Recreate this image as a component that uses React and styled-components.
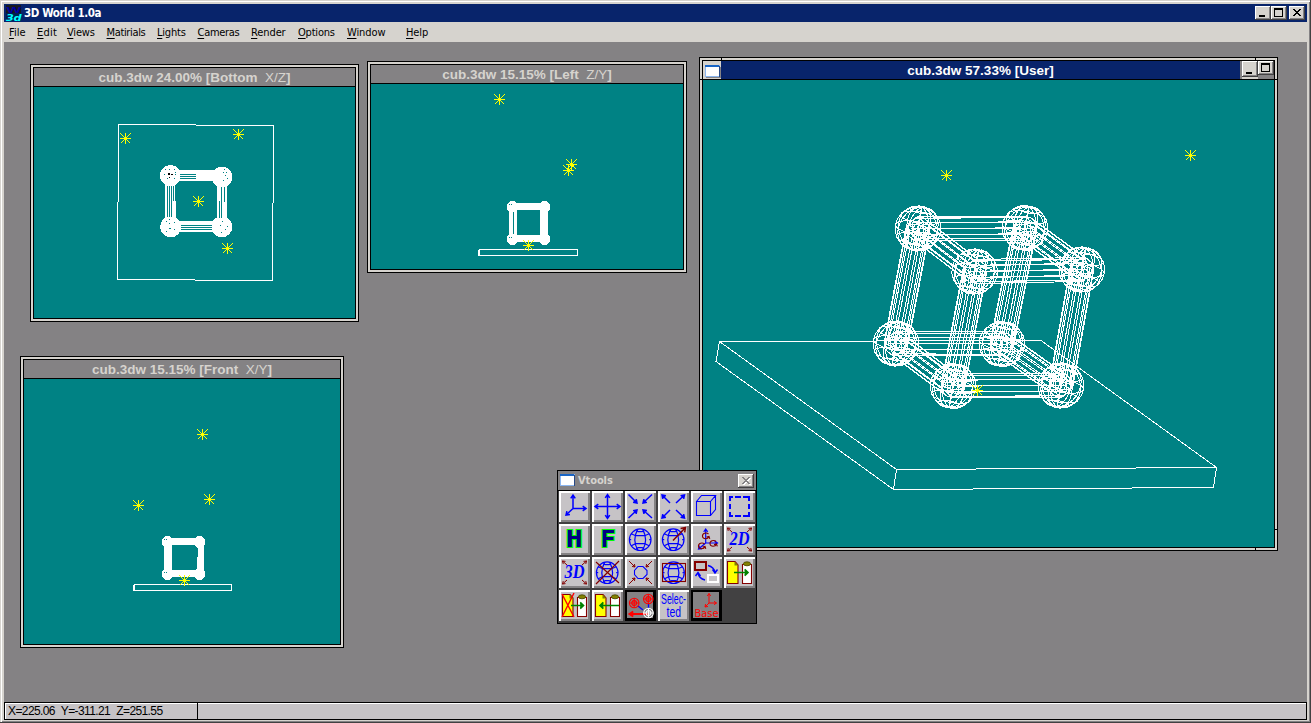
import React from 'react';
import styled, { createGlobalStyle, css } from 'styled-components';

const c = {
  face: '#d6d3ce',
  gray: '#848284',
  silver: '#c6c3c6',
  navy: '#08246b',
  teal: '#008284',
  dark: '#424142',
  blue: '#0000ff',
  maroon: '#840000',
};

const Global = createGlobalStyle`
  * { box-sizing: border-box; }
  html, body { margin: 0; height: 100%; overflow: hidden; background: ${c.face}; }
  body { font-family: "DejaVu Sans Condensed", "DejaVu Sans", sans-serif; font-size: 11px; color: #000; }
  svg { display: block; }
`;

const Frame = styled.div`
  width: 1311px;
  height: 723px;
  display: flex;
  flex-direction: column;
  padding: 4px 3px 2px 4px;
  background: ${c.face};
  border: solid ${c.dark};
  border-width: 0 1px 1px 0;
  box-shadow: inset 1px 1px 0 ${c.face}, inset 2px 2px 0 #fff, inset -1px -1px 0 ${c.gray};
`;

const AppTitle = styled.header`
  height: 18px;
  flex: none;
  display: flex;
  align-items: center;
  gap: 2px;
  padding: 0 2px 0 1px;
  background: ${c.navy};
  color: #fff;
  font-weight: bold;
  font-size: 11.5px;
  letter-spacing: -0.42px;
`;

const TitleText = styled.span`
  flex: 1;
  line-height: 18px;
  white-space: pre;
`;

const Buttons = styled.div`
  display: flex;
`;

const CaptionButton = styled.button`
  width: 16px;
  height: ${(p) => p.$h || 14}px;
  margin: 0 0 0 ${(p) => p.$ml || 0}px;
  padding: 0;
  flex: none;
  border: 0;
  background: ${c.face};
  box-shadow: inset -1px -1px 0 ${c.dark}, inset 1px 1px 0 #fff, inset -2px -2px 0 ${c.gray};
`;

const MenuBar = styled.nav`
  height: 20px;
  flex: none;
  display: flex;
  align-items: center;
  padding: 1px 0 0 5px;
  font-size: 11px;
  line-height: 20px;
`;

const MenuItem = styled.span`
  width: ${(p) => p.$w}px;
  letter-spacing: ${(p) => p.$ls || 0}px;
  white-space: nowrap;
  u { text-underline-offset: 2px; text-decoration-thickness: 1px; }
`;

const Desktop = styled.main`
  flex: 1;
  position: relative;
  background: ${c.gray};
`;

const StatusBar = styled.footer`
  height: 18px;
  flex: none;
  display: flex;
  border: 1px solid #000;
  background: ${c.silver};
  box-shadow: inset 1px 1px 0 #fff;
`;

const StatusCell = styled.div`
  width: 193px;
  padding-left: 3px;
  border-right: 1px solid #000;
  font: 12px/16px "Liberation Sans", sans-serif;
  letter-spacing: -0.6px;
  word-spacing: 0.3px;
  white-space: pre;
`;

const ticks = css`
  background:
    linear-gradient(#000, #000) left 21px top 0 / 1px 100% no-repeat,
    linear-gradient(#000, #000) right 21px top 0 / 1px 100% no-repeat,
    linear-gradient(#000, #000) left 0 top 21px / 100% 1px no-repeat,
    linear-gradient(#000, #000) left 0 bottom 20px / 100% 1px no-repeat,
    ${c.face};
`;

const ChildFrame = styled.section`
  position: absolute;
  left: ${(p) => p.$x}px;
  top: ${(p) => p.$y}px;
  width: ${(p) => p.$w}px;
  height: ${(p) => p.$h}px;
  padding: 2px;
  border: 1px solid #000;
  background: ${c.face};
  ${(p) => p.$active && ticks}
`;

const ChildInner = styled.div`
  height: 100%;
  display: flex;
  flex-direction: column;
  border: 1px solid #000;
`;

const ChildTitle = styled.div`
  height: 19px;
  flex: none;
  display: flex;
  justify-content: space-between;
  border-bottom: 1px solid #000;
  background: ${(p) => (p.$active ? c.navy : c.gray)};
  color: ${(p) => (p.$active ? '#fff' : c.face)};
`;

const ChildLabel = styled.span`
  flex: 1;
  text-align: center;
  font: bold 13.5px/19px "Liberation Sans", sans-serif;
  white-space: pre;
  em { font-style: normal; font-weight: normal; }
`;

const SysMenu = styled.div`
  width: 18px;
  flex: none;
  padding: 4px 0 0 2px;
  background: ${c.face};
`;

const ChildButtons = styled.div`
  width: 34px;
  flex: none;
  display: flex;
  padding-left: 2px;
  background: linear-gradient(90deg, ${c.gray} 2px, ${c.face} 2px 18px, ${c.gray} 18px);
`;

const Viewport = styled.div`
  flex: 1;
  min-height: 0;
  background: ${c.teal};
`;

const Palette = styled.aside`
  position: absolute;
  left: 553px;
  top: 428px;
  width: 200px;
  height: 154px;
  border: 1px solid #000;
  background: ${c.dark};
`;

const PaletteTitle = styled.div`
  height: 20px;
  display: flex;
  align-items: center;
  gap: 2px;
  padding: 0 2px;
  border-bottom: 1px solid #000;
  background: ${c.gray};
  color: ${c.face};
  font: bold 11px/18px "DejaVu Sans Condensed", "DejaVu Sans", sans-serif;
  letter-spacing: -0.1px;
`;

const ToolGrid = styled.div`
  display: grid;
  grid-template-columns: repeat(6, 31px);
  grid-auto-rows: 31px;
  gap: 2px;
  padding: 0 1px;
`;

const ToolButton = styled.button`
  width: 31px;
  height: 31px;
  padding: 0;
  border: 0;
  background: ${(p) => (p.$pressed ? c.gray : c.silver)};
  box-shadow: ${(p) => (p.$pressed
    ? 'inset 0 0 0 2px #000, inset -3px -3px 0 #000'
    : `inset 1px 1px 0 #fff, inset 2px 2px 0 #fff, inset -1px -1px 0 ${c.gray}, inset -2px -2px 0 ${c.gray}`)};
`;

/* ---------- glyphs ---------- */

const MinGlyph = ({ h = 14, y = 9 }) => (
  <svg width="16" height={h}><rect x="4" y={y} width="6" height="2" /></svg>
);
const MaxGlyph = () => (
  <svg width="16" height="14"><path d="M3 2h9v9H3zM4 4v6h7V4z" fillRule="evenodd" /></svg>
);
const CloseGlyph = ({ color = '#000', shadow }) => (
  <svg width="16" height="14" shapeRendering="crispEdges">
    {shadow && <path transform="translate(1 1)" d="M4 3h2v1h1v1h2V4h1V3h2v1h-1v1h-1v1H9v1h1v1h1v1h1v1h-2V9H9V8H7v1H6v1H4V9h1V8h1V7h1V6H6V5H5V4H4z" fill="#fff" />}
    <path d="M4 3h2v1h1v1h2V4h1V3h2v1h-1v1h-1v1H9v1h1v1h1v1h1v1h-2V9H9V8H7v1H6v1H4V9h1V8h1V7h1V6H6V5H5V4H4z" fill={color} />
  </svg>
);
const WindowGlyph = () => (
  <svg width="16" height="14" shapeRendering="crispEdges">
    <rect x="1" y="2" width="15" height="11" fill="#848284" />
    <rect x="0" y="0" width="15" height="12" fill="#8cb6ef" />
    <rect x="1" y="2" width="13" height="9" fill="#fff" />
    <rect x="0" y="0" width="14" height="2" fill="#1865c6" />
    <rect x="14" y="1" width="1" height="11" fill="#294984" />
  </svg>
);
const Logo = () => (
  <svg width="17" height="16" overflow="visible">
    <rect x="1" width="15" height="8" fill="#181820" />
    <rect x="1" y="8" width="15" height="8" fill="#002050" />
    <text x="1.5" y="7.6" textLength="14" lengthAdjust="spacingAndGlyphs" fontFamily="Liberation Sans, sans-serif" fontWeight="bold" fontSize="9" fill="#0000a0">W</text>
    <text x="1" y="15.6" textLength="15" lengthAdjust="spacingAndGlyphs" fontFamily="DejaVu Sans, sans-serif" fontStyle="italic" fontWeight="bold" fontSize="9.5" fill="#00ffff">3d</text>
  </svg>
);

/* ---------- scene ---------- */

const Star = ({ x, y }) => (
  <path
    transform={`translate(${x} ${y})`}
    d="M-5 .5H6M.5 -5V6M-4.5 -4.5l10 10M5.5 -4.5l-10 10M-1 -.5H2M-1 1.5H2"
    stroke="#ffff00"
    fill="none"
    shapeRendering="crispEdges"
  />
);

// screen vectors of the three unit axes in the user camera
const AX = [0.871, 0];
const AY = [0.179, -0.936];
const AZ = [0.464, 0.342];
const mix = (a, b, d) => [
  a * AX[0] + b * AY[0] + d * AZ[0],
  a * AX[1] + b * AY[1] + d * AZ[1],
];
const fmt = (pts) => pts.map((p) => `${p[0].toFixed(1)} ${p[1].toFixed(1)}`).join('L');

function spherePath(cx, cy, r) {
  let d = '';
  const steps = 24;
  for (let m = 0; m < 6; m += 1) {
    const t = (m * Math.PI) / 6;
    const pts = [];
    for (let k = 0; k <= steps; k += 1) {
      const a = (k * 2 * Math.PI) / steps;
      const [x, y] = mix(r * Math.sin(a) * Math.cos(t), r * Math.cos(a), r * Math.sin(a) * Math.sin(t));
      pts.push([cx + x, cy + y]);
    }
    d += `M${fmt(pts)}`;
  }
  for (let l = 1; l < 6; l += 1) {
    const f = (l * Math.PI) / 6;
    const rr = r * Math.sin(f);
    const pts = [];
    for (let k = 0; k <= steps; k += 1) {
      const a = (k * 2 * Math.PI) / steps;
      const [x, y] = mix(rr * Math.cos(a), r * Math.cos(f), rr * Math.sin(a));
      pts.push([cx + x, cy + y]);
    }
    d += `M${fmt(pts)}`;
  }
  return d;
}

function tubePath(a, b, axis, r) {
  const n = 12;
  const ends = [a, b].map((p) => {
    const ring = [];
    for (let k = 0; k <= n; k += 1) {
      const t = ((k + 0.35) * 2 * Math.PI) / n;
      const u = r * Math.cos(t);
      const v = r * Math.sin(t);
      const [x, y] = axis === 0 ? mix(0, u, v) : axis === 1 ? mix(u, 0, v) : mix(u, v, 0);
      ring.push([p[0] + x, p[1] + y]);
    }
    return ring;
  });
  let d = `M${fmt(ends[0])}M${fmt(ends[1])}`;
  for (let k = 0; k < n; k += 1) d += `M${fmt([ends[0][k], ends[1][k]])}`;
  return d;
}

const nodes = [
  [918, 228.5], [1025, 228], [974.7, 271.5], [1081.8, 269.5],
  [896, 343.5], [1002, 344], [953, 386], [1061, 385.5],
];
const edges = [
  [0, 1, 0], [2, 3, 0], [4, 5, 0], [6, 7, 0],
  [0, 4, 1], [1, 5, 1], [2, 6, 1], [3, 7, 1],
  [0, 2, 2], [1, 3, 2], [4, 6, 2], [5, 7, 2],
];

const Scene = ({ x, y, w, h, children }) => (
  <svg width={w} height={h} viewBox={`${x} ${y} ${w} ${h}`} shapeRendering="crispEdges">{children}</svg>
);

const UserScene = () => (
  <Scene x={703} y={80} w={571} h={467}>
    <g fill="none" stroke="#fff" strokeWidth="1">
      <path d="M719.5 341.5L1041 340.5L1216.5 467.5L896.5 469.5ZM719.5 341.5L716 361.5L893.5 489.5L1213.5 487.5L1216.5 467.5M896.5 469.5L893.5 489.5" />
      {edges.map(([a, b, axis]) => <path key={`${a}-${b}`} d={tubePath(nodes[a], nodes[b], axis, 12)} />)}
      {nodes.map((p) => <path key={p.join()} d={spherePath(p[0], p[1], 22.8)} />)}
    </g>
    <Star x={946} y={175} /><Star x={1190} y={155} /><Star x={977} y={390} />
  </Scene>
);

const BottomScene = () => (
  <Scene x={34} y={87} w={321} h={231}>
    <path d="M118 124.5H196M196 125.5H274M273.5 125V203M272.5 203V281M273 280.5H195M195 279.5H117M117.5 280V202M118.5 202V124" stroke="#fff" fill="none" />
    <g fill="#fff">
      <rect x="166" y="170" width="60" height="11" />
      <rect x="166" y="221" width="60" height="11" />
      <rect x="165" y="175" width="10" height="52" />
      <rect x="166" y="201" width="10" height="26" />
      <rect x="217" y="175" width="10" height="52" />
      <circle cx="170.5" cy="175.5" r="10.5" /><circle cx="222" cy="177" r="10.5" />
      <circle cx="170.8" cy="226.8" r="10.5" /><circle cx="221.8" cy="226.8" r="10.5" />
    </g>
    <path d="M180 174.5H196M180 176.5H196M180 178.5H196M181 225.5H212M181 227.5H212M181 229.5H212M167.5 186V217M169.5 186V217M171.5 186V217M173.5 186V201M219.5 201V218M221.5 187V218M224.5 187V202" stroke={c.teal} />
    <path d="M165 169.5h1m3 0h1m4 0h1M164 174.5h1m10 0h1M175 172.5h1M167 178.5h1m6 0h1M224 169.5h1m-2 3h1m2 0h1m-2 3h1m-3 5h1m3-2h1M169 219.5h1m-1 4h1m4 6h1m-9 2h1m2-3h2M166 221.5h1m7 1h1M222 221.5h1m-3 4h1m4 4h1m-5 3h1m5-6h1" stroke={c.teal} />
    <path d="M168 173.5h2M168 174.5h2M171 174.5h2M169 177.5h1" stroke="#000" />
    <Star x={125} y={138} /><Star x={238} y={134} /><Star x={198} y={201} /><Star x={227} y={248} />
  </Scene>
);

const SmallCube = ({ x, y, gap }) => (
  <g transform={`translate(${x} ${y})`}>
    <g fill="#fff">
      <rect x="0" y="-3" width="33" height="7" />
      <rect x="0" y="29" width="33" height="7" />
      <rect x="-3" y="0" width="8" height="32" />
      <rect x={gap ? 28 : 31} y="0" width={gap ? 8 : 6} height="32" />
      <rect x={gap ? 28 : 30} y="16" width="7" height="16" />
      <circle cx="1" cy="1" r="6" /><circle cx="33" cy="1" r="6" />
      <circle cx="1" cy="33" r="6" /><circle cx="33" cy="33" r="6" />
    </g>
    {gap && <path d="M1.5 6V28" stroke={c.teal} />}
    <path d="M-3 -1.5h1m1 0h1M-3 31.5h1m1 0h1" stroke={c.teal} />
  </g>
);

const LeftScene = () => (
  <Scene x={371} y={84} w={312} h={185}>
    <SmallCube x={511.5} y={206} gap />
    <path d="M478.5 250V256M479.5 249.5H577.5V255.5H479.5Z" fill="none" stroke="#fff" />
    <Star x={499} y={99} /><Star x={571} y={164} /><Star x={568} y={170} /><Star x={528} y={245} />
  </Scene>
);

const FrontScene = () => (
  <Scene x={24} y={379} w={316} h={265}>
    <SmallCube x={166.5} y={541} />
    <path d="M133.5 585V591M134.5 584.5H231.5V590.5H134.5Z" fill="none" stroke="#fff" />
    <Star x={202} y={434} /><Star x={209} y={499} /><Star x={138} y={505} /><Star x={184} y={580} />
  </Scene>
);

/* ---------- tool icons ---------- */

function Arrow({ from, to, color = c.blue, w = 1.5, head = 4, spread = 0.6, solid }) {
  const a = Math.atan2(to[1] - from[1], to[0] - from[0]);
  const p1 = [to[0] - head * Math.cos(a - spread), to[1] - head * Math.sin(a - spread)];
  const p2 = [to[0] - head * Math.cos(a + spread), to[1] - head * Math.sin(a + spread)];
  return (
    <path
      d={`M${from.join(' ')}L${to.join(' ')}M${p1.join(' ')}L${to.join(' ')}L${p2.join(' ')}`}
      stroke={color}
      strokeWidth={w}
      fill={solid ? color : 'none'}
    />
  );
}
const Icon = ({ children }) => <svg width="31" height="31" fill="none">{children}</svg>;

const Globe = ({ x = 15.5, y = 15.7 }) => (
  <g transform={`translate(${x} ${y})`} stroke={c.blue} strokeWidth="1.2">
    <circle r="10.8" />
    <path d="M-2.5 -10.3C-6 -4 -6 4 -2.5 10.3M2.5 -10.3C6 -4 6 4 2.5 10.3" />
    <path d="M-9 -6L-4.5 -4H4.5L9 -6M-9 6L-4.5 4H4.5L9 6M-10.8 0H-9M9 0H10.8M-4 -9L-2 -8H2L4 -9M-4 9L-2 8H2L4 9" />
  </g>
);
const Corners = () => (
  <>
    <Arrow from={[8, 8]} to={[3.5, 4]} color={c.maroon} w={1} head={3} />
    <Arrow from={[23, 8]} to={[27.5, 4]} color={c.maroon} w={1} head={3} />
    <Arrow from={[8, 23]} to={[3.5, 27]} color={c.maroon} w={1} head={3} />
    <Arrow from={[23, 23]} to={[27.5, 27]} color={c.maroon} w={1} head={3} />
  </>
);
const Letter = ({ ch, x, len }) => (
  <text x={x} y="23" textLength={len} lengthAdjust="spacingAndGlyphs" fontFamily="DejaVu Sans Mono, monospace" fontWeight="bold" fontSize="22.5" fill="#000084" stroke="#00ff00" strokeWidth="2" paintOrder="stroke">{ch}</text>
);
const Dim = ({ ch }) => (
  <text x="5.5" y="21.3" textLength="20" lengthAdjust="spacingAndGlyphs" fontFamily="Liberation Serif, serif" fontStyle="italic" fontWeight="bold" fontSize="18" fill={c.blue}>{ch}</text>
);
const Doc = () => (
  <g>
    <path d="M3.5 4.5H11L14 8V26.5H3.5Z" fill="#ffff00" stroke={c.maroon} strokeWidth="1.1" />
    <path d="M10.5 4.5V8.5H14.5Z" fill="#848200" />
  </g>
);
const Clipboard = () => (
  <g>
    <path d="M18.5 7.5H27.5V26.5H18.5Z" fill="#fff" stroke={c.maroon} strokeWidth="1.1" />
    <ellipse cx="23" cy="6.8" rx="3.6" ry="2" fill="#848200" stroke="#424100" strokeWidth=".8" />
  </g>
);
const GreenArrow = ({ from, to }) => (
  <Arrow from={[from, 15.5]} to={[to, 15.5]} color="#008200" w={1.6} head={4.5} spread={0.75} solid />
);
const Ball = ({ x, y, color, r = 4.8 }) => (
  <g transform={`translate(${x} ${y})`} stroke={color} strokeWidth="1.1">
    <circle r={r} /><circle r={r / 2} /><path d={`M${-r} 0H${r}M0 ${-r}V${r}`} />
  </g>
);
const Swirl = ({ x, y }) => (
  <path transform={`translate(${x} ${y})`} d="M3 -2C1 -4 -3.5 -3 -3 .5C-2.5 3.5 2.5 3.5 3.5 .5M1 1l2.5 -.5l.8 2.4" stroke={c.maroon} strokeWidth="1.1" />
);

const tools = [
  { n: 'axes', i: <><Arrow from={[14, 17.5]} to={[14, 4]} /><Arrow from={[14, 17.5]} to={[27, 17.5]} /><Arrow from={[14, 17.5]} to={[7, 24]} /></> },
  { n: 'move', i: <><Arrow from={[15.5, 15.5]} to={[15.5, 3.5]} /><Arrow from={[15.5, 15.5]} to={[15.5, 27.5]} /><Arrow from={[15.5, 15.5]} to={[3, 15.5]} /><Arrow from={[15.5, 15.5]} to={[28, 15.5]} /></> },
  { n: 'shrink', i: <><Arrow from={[3.5, 3.5]} to={[12, 12]} solid /><Arrow from={[27, 3.5]} to={[18, 12]} solid /><Arrow from={[3.5, 27]} to={[12, 19]} solid /><Arrow from={[27, 27]} to={[18, 19]} solid /></> },
  { n: 'expand', i: <><Arrow from={[12, 12]} to={[4, 4]} solid /><Arrow from={[18, 12]} to={[26.5, 4]} solid /><Arrow from={[12, 19]} to={[4, 27]} solid /><Arrow from={[18, 19]} to={[26.5, 27]} solid /></> },
  { n: 'box', i: <path d="M5.5 10.5H19.5V24.5H5.5ZM5.5 10.5L10.5 4.5H24.5L19.5 10.5M24.5 4.5V18.5L19.5 24.5" stroke={c.blue} strokeWidth="1.1" /> },
  { n: 'select', i: <path d="M4.5 6H9M11 6H17M19 6H26M4.5 25H9M11 25H17M19 25H26M6 6V10M6 12.5V18M6 20.5V25M25 6V10M25 12.5V18M25 20.5V25" stroke={c.blue} strokeWidth="2" shapeRendering="crispEdges" /> },
  { n: 'h', i: <Letter ch="H" x="7" len="16.5" /> },
  { n: 'f', i: <Letter ch="F" x="8.5" len="15" /> },
  { n: 'globe', i: <Globe x={15.2} /> },
  { n: 'globe-out', i: <><Globe x={15.2} /><Arrow from={[15, 16.5]} to={[27.5, 3.5]} color={c.maroon} head={5} /></> },
  { n: 'rotate', i: <><Arrow from={[14.7, 19]} to={[14.7, 5]} w={1.2} head={3.5} /><Arrow from={[14.7, 19]} to={[26.5, 19]} w={1.2} head={3.5} /><Arrow from={[14.7, 19]} to={[7.5, 25]} w={1.2} head={3.5} /><Swirl x={14.5} y={12} /><Swirl x={22} y={19.5} /><Swirl x={10.5} y={22} /></> },
  { n: '2d', i: <><Dim ch="2D" /><Corners /></> },
  { n: '3d', i: <><Dim ch="3D" /><Corners /></> },
  { n: 'globe-x', i: <><Globe x={15.2} /><path d="M4 5L27 26M27 4L4 27" stroke={c.maroon} strokeWidth="1.2" /></> },
  { n: 'focus', i: <><path d="M13 9.5H18L22 13.5V17.5L18 21.5H13L9.5 17.5V13.5Z" stroke={c.blue} strokeWidth="1.1" /><Arrow from={[4, 4]} to={[10, 10]} color={c.maroon} w={1} head={3} /><Arrow from={[27, 4]} to={[21, 10]} color={c.maroon} w={1} head={3} /><Arrow from={[4, 27]} to={[10, 21]} color={c.maroon} w={1} head={3} /><Arrow from={[27, 27]} to={[21, 21]} color={c.maroon} w={1} head={3} /></> },
  { n: 'globe-box', i: <><Globe x={15.5} /><rect x="4.5" y="6.5" width="23" height="18" stroke={c.maroon} strokeWidth="1.1" /></> },
  { n: 'swap', i: <><rect x="4" y="5" width="11" height="8" stroke={c.maroon} strokeWidth="2" /><rect x="17" y="18" width="10" height="7" stroke="#fff" strokeWidth="2" /><path d="M17 8.5Q23 10 24 15.5M21.5 12.5L24 16L26.5 12.5M14 23Q8 21.5 7 16M4.5 19L7 15.5L9.5 19" stroke={c.blue} strokeWidth="1.4" /></> },
  { n: 'copy', i: <><Doc /><Clipboard /><GreenArrow from={10} to={24} /></> },
  { n: 'cut', i: <><Doc /><Clipboard /><GreenArrow from={12} to={24.5} /><path d="M3 4L15 27M15 3L3 27" stroke="#ff0000" strokeWidth="1.4" /></> },
  { n: 'paste', i: <><Doc /><Clipboard /><GreenArrow from={27} to={8} /></> },
  { n: 'link', p: true, i: <><path d="M13 16L18 20M23.5 14V18" stroke={c.blue} strokeWidth="1.3" /><Ball x={9.2} y={13} color="#ff0000" /><Ball x={23.3} y={9} color="#ff0000" /><Arrow from={[24, 24]} to={[4.5, 24]} color="#ff0000" w={2} head={4.5} /><Ball x={23.5} y={23} color="#fff" /></> },
  { n: 'selected', i: <g fill={c.blue} fontFamily="Liberation Sans Narrow, Liberation Sans, sans-serif" fontSize="14"><text x="3" y="13.5" textLength="25" lengthAdjust="spacingAndGlyphs">Selec-</text><text x="8.5" y="27" textLength="14.5" lengthAdjust="spacingAndGlyphs">ted</text></g> },
  { n: 'base', p: true, i: <><Arrow from={[18, 13]} to={[18, 3.5]} color="#ff0000" w={1} head={3} /><Arrow from={[18, 13]} to={[25.5, 13]} color="#ff0000" w={1} head={3} /><Arrow from={[18, 13]} to={[14, 17]} color="#ff0000" w={1} head={3} /><text x="3.5" y="26.5" textLength="24" lengthAdjust="spacingAndGlyphs" fill="#ff0000" fontFamily="DejaVu Sans, sans-serif" fontSize="11">Base</text></> },
];

const menu = [
  ['File', 28], ['Edit', 30, 0.25], ['Views', 39.5, -0.2], ['Matirials', 50.5, -0.35], ['Lights', 40.5, -0.2],
  ['Cameras', 53.5, -0.3], ['Render', 47, -0.1], ['Options', 49, -0.2], ['Window', 59, -0.1], ['Help', 30, -0.1],
];

const ChildWindow = ({ x, y, w, h, title, suffix, end, active, children }) => (
  <ChildFrame $x={x - 4} $y={y - 42} $w={w} $h={h} $active={active}>
    <ChildInner>
      <ChildTitle $active={active}>
        {active && <SysMenu><WindowGlyph /></SysMenu>}
        <ChildLabel>{title}{suffix && <em>{suffix}</em>}{end}</ChildLabel>
        {active && (
          <ChildButtons>
            <CaptionButton $h={16}><MinGlyph h={16} y={11} /></CaptionButton>
            <CaptionButton><MaxGlyph /></CaptionButton>
          </ChildButtons>
        )}
      </ChildTitle>
      <Viewport>{children}</Viewport>
    </ChildInner>
  </ChildFrame>
);

export default function App() {
  return (
    <>
      <Global />
      <Frame>
        <AppTitle>
          <Logo />
          <TitleText>3D World 1.0a</TitleText>
          <Buttons>
            <CaptionButton><MinGlyph /></CaptionButton>
            <CaptionButton><MaxGlyph /></CaptionButton>
            <CaptionButton $ml={2}><CloseGlyph /></CaptionButton>
          </Buttons>
        </AppTitle>
        <MenuBar>
          {menu.map(([label, w, ls]) => (
            <MenuItem key={label} $w={w} $ls={ls}><u>{label[0]}</u>{label.slice(1)}</MenuItem>
          ))}
        </MenuBar>
        <Desktop>
          <ChildWindow x={30} y={64} w={329} h={258} title="cub.3dw 24.00% [Bottom  " suffix="X/Z" end="]"><BottomScene /></ChildWindow>
          <ChildWindow x={367} y={61} w={320} h={212} title="cub.3dw 15.15% [Left  " suffix="Z/Y" end="]"><LeftScene /></ChildWindow>
          <ChildWindow x={20} y={356} w={324} h={292} title="cub.3dw 15.15% [Front  " suffix="X/Y" end="]"><FrontScene /></ChildWindow>
          <ChildWindow active x={699} y={57} w={579} h={494} title="cub.3dw 57.33% [User]"><UserScene /></ChildWindow>
          <Palette>
            <PaletteTitle>
              <WindowGlyph />
              <TitleText>Vtools</TitleText>
              <CaptionButton><CloseGlyph color={c.gray} shadow /></CaptionButton>
            </PaletteTitle>
            <ToolGrid>
              {tools.map((t) => (
                <ToolButton key={t.n} $pressed={t.p}><Icon>{t.i}</Icon></ToolButton>
              ))}
            </ToolGrid>
          </Palette>
        </Desktop>
        <StatusBar>
          <StatusCell>X=225.06  Y=-311.21  Z=251.55</StatusCell>
        </StatusBar>
      </Frame>
    </>
  );
}
